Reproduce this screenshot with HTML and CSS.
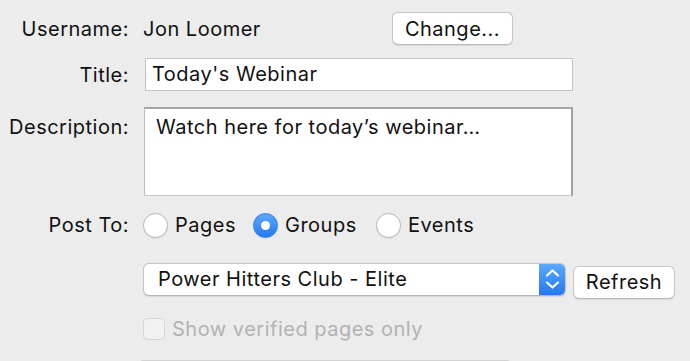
FILE: index.html
```html
<!DOCTYPE html>
<html>
<head>
<meta charset="utf-8">
<link rel="stylesheet" href="styles.css">
</head>
<body>
<div class="form">
  <div class="row row-user">
    <span class="label">Username:</span>
    <div class="field user-field">
      <span class="value">Jon Loomer</span>
      <button class="btn btn-change">Change...</button>
    </div>
  </div>
  <div class="row row-title">
    <span class="label">Title:</span>
    <div class="field">
      <div class="input">Today's Webinar</div>
    </div>
  </div>
  <div class="row row-desc">
    <span class="label">Description:</span>
    <div class="field">
      <div class="textarea">Watch here for today’s webinar…</div>
    </div>
  </div>
  <div class="row row-post">
    <span class="label">Post To:</span>
    <div class="field radios">
      <span class="radio-opt"><span class="radio"></span><span class="radio-text">Pages</span></span>
      <span class="radio-opt"><span class="radio checked"><span class="dot"></span></span><span class="radio-text">Groups</span></span>
      <span class="radio-opt"><span class="radio"></span><span class="radio-text">Events</span></span>
    </div>
  </div>
  <div class="row row-select">
    <span class="label"></span>
    <div class="field select-field">
      <div class="select">
        <span class="select-text">Power Hitters Club - Elite</span>
        <span class="stepper">
          <svg width="27" height="33" viewBox="0 0 27 33"><path d="M8 12.5 L13.5 7.5 L19 12.5" fill="none" stroke="#fff" stroke-width="2.2" stroke-linecap="round" stroke-linejoin="round"/><path d="M8 19.5 L13.5 24.5 L19 19.5" fill="none" stroke="#fff" stroke-width="2.2" stroke-linecap="round" stroke-linejoin="round"/></svg>
        </span>
      </div>
      <button class="btn btn-refresh">Refresh</button>
    </div>
  </div>
  <div class="row row-check">
    <span class="label"></span>
    <div class="field check-field">
      <span class="checkbox"></span>
      <span class="check-text">Show verified pages only</span>
    </div>
  </div>
  <div class="row row-bottom">
    <span class="label"></span>
    <div class="field">
      <div class="bottom-box"></div>
    </div>
  </div>
</div>
</body>
</html>
```

FILE: styles.css
```css
html, body {
  margin: 0;
  padding: 0;
  background: #ececec;
  height: 100%;
  overflow: hidden;
}
body {
  font-family: Inter, "Liberation Sans", sans-serif;
  font-size: 20px;
  letter-spacing: 0.5px;
  color: #111;
}
.form {
  display: flex;
  flex-direction: column;
  padding-top: 12px;
}
.row {
  display: flex;
  column-gap: 14px;
  align-items: center;
}
.label {
  width: 129px;
  flex: none;
  text-align: right;
}
.field {
  display: flex;
  align-items: center;
}
.user-field {
  height: 33px;
}
.value {
  width: 249px;
}
.btn {
  font: inherit;
  letter-spacing: inherit;
  color: #111;
  background: #fff;
  border: 1px solid #c6c6c6;
  border-bottom-color: #b8b8b8;
  border-radius: 6px;
  padding: 0;
  box-shadow: 0 0.5px 1px rgba(0,0,0,0.08);
}
.btn-change {
  width: 121px;
  height: 33px;
}
.row-title {
  margin-top: 13px;
}
.input {
  margin-left: 2px;
  background: #fff;
  border: 1px solid #c4c4c4;
  padding: 0 0 0 6px;
  line-height: 31px;
  box-sizing: border-box;
  height: 33px;
  width: 428px;
}
.row-desc {
  margin-top: 16px;
  align-items: flex-start;
}
.row-desc .label {
  padding-top: 8px;
}
.textarea {
  margin-left: 1px;
  width: 429px;
  height: 89px;
  box-sizing: border-box;
  background: #fff;
  border: 1px solid #bcbcbc;
  border-top: 2px solid #a6a6a6;
  border-right: 2px solid #9e9e9e;
  border-bottom-color: #c9c9c9;
  padding: 6px 0 0 11px;
  line-height: 24px;
}
.row-post {
  margin-top: 16px;
  height: 26px;
}
.radio-opt {
  display: flex;
  align-items: center;
}
.radio {
  width: 25px;
  height: 25px;
  box-sizing: border-box;
  border-radius: 50%;
  background: #fff;
  border: 1px solid #b8b8b8;
  box-shadow: 0 0.5px 1px rgba(0,0,0,0.1);
  display: flex;
  align-items: center;
  justify-content: center;
}
.radio.checked {
  border: 1px solid #2f7ff2;
  background: linear-gradient(#5aa8fc, #2479f3);
}
.dot {
  width: 9px;
  height: 9px;
  border-radius: 50%;
  background: #fff;
}
.radio-text {
  margin-left: 7px;
}
.radio-opt:nth-child(1) { width: 110px; }
.radio-opt:nth-child(2) { width: 123px; }
.row-select {
  margin-top: 25px;
  align-items: flex-start;
}
.select-field {
  align-items: flex-start;
}
.select {
  width: 423px;
  height: 33px;
  box-sizing: border-box;
  display: flex;
  background: #fff;
  border: 1px solid #c6c6c6;
  border-bottom-color: #b5b5b5;
  border-radius: 6px;
  overflow: hidden;
  box-shadow: 0 0.5px 1px rgba(0,0,0,0.1);
}
.select-text {
  flex: 1;
  padding-left: 14px;
  line-height: 31px;
}
.stepper {
  width: 27px;
  margin: -1px -1px -1px 0;
  background: linear-gradient(#5eaafc, #1f77f3);
  display: flex;
}
.btn-refresh {
  margin-left: 7px;
  margin-top: 2.5px;
  width: 102px;
  height: 33px;
}
.row-check {
  margin-top: 19px;
  height: 23px;
}
.checkbox {
  width: 22px;
  height: 22px;
  box-sizing: border-box;
  border: 1px solid #d6d6d6;
  border-radius: 4px;
  background: #f1f1f1;
}
.check-text {
  margin-left: 7px;
  color: #b2b2b2;
}
.row-bottom {
  margin-top: 19px;
}
.bottom-box {
  margin-left: -3px;
  width: 370px;
  height: 2px;
  border-top: 1px solid #d3d3d3;
  border-radius: 6px 6px 0 0;
}
```
